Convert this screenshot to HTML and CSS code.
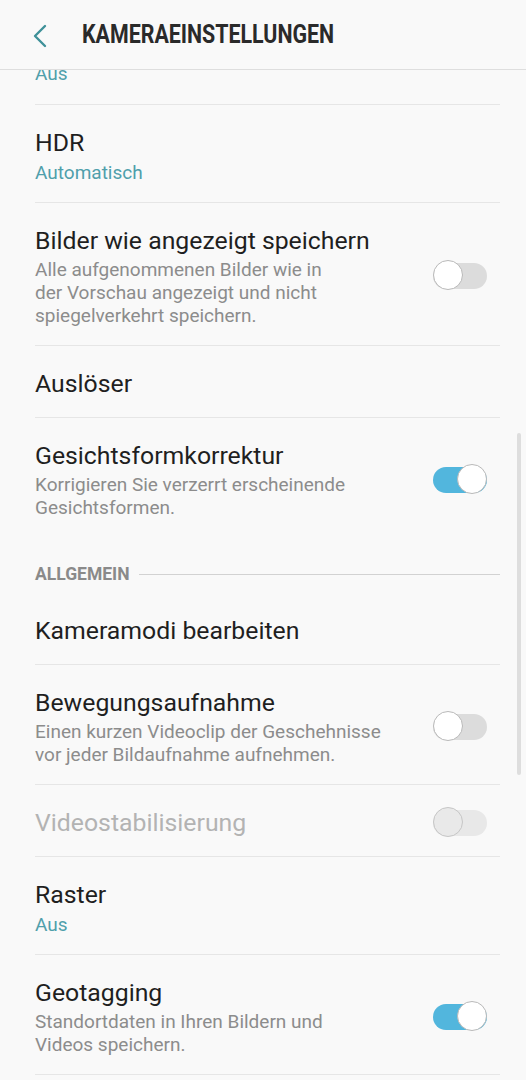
FILE: index.html
```html
<!DOCTYPE html>
<html lang="de">
<head>
    <meta charset="UTF-8">
    <meta name="viewport" content="width=device-width, initial-scale=1.0">
    <title>Kameraeinstellungen</title>
    <link rel="stylesheet" href="styles.css">
</head>
<body>
    <div class="screen">
        <div class="header">
            <svg class="back" width="16" height="24" viewBox="0 0 16 24">
                <path d="M13 2 L3 12 L13 22" fill="none" stroke="#3f9199" stroke-width="2.4" stroke-linecap="round" stroke-linejoin="round"/>
            </svg>
            <h1 class="title">KAMERAEINSTELLUNGEN</h1>
        </div>

        <div class="list">
            <div class="row partial">
                <div class="cut"><div class="sub">Aus</div></div>
            </div>

            <div class="row">
                <div class="text">
                    <div class="label">HDR</div>
                    <div class="sub">Automatisch</div>
                </div>
            </div>

            <div class="row">
                <div class="text">
                    <div class="label">Bilder wie angezeigt speichern</div>
                    <div class="desc">Alle aufgenommenen Bilder wie in<br>der Vorschau angezeigt und nicht<br>spiegelverkehrt speichern.</div>
                </div>
                <div class="switch"><div class="knob"></div></div>
            </div>

            <div class="row">
                <div class="text">
                    <div class="label">Auslöser</div>
                </div>
            </div>

            <div class="row last">
                <div class="text">
                    <div class="label">Gesichtsformkorrektur</div>
                    <div class="desc">Korrigieren Sie verzerrt erscheinende<br>Gesichtsformen.</div>
                </div>
                <div class="switch on"><div class="knob"></div></div>
            </div>

            <div class="section">
                <span>ALLGEMEIN</span>
                <div class="rule"></div>
            </div>

            <div class="row">
                <div class="text">
                    <div class="label">Kameramodi bearbeiten</div>
                </div>
            </div>

            <div class="row">
                <div class="text">
                    <div class="label">Bewegungsaufnahme</div>
                    <div class="desc">Einen kurzen Videoclip der Geschehnisse<br>vor jeder Bildaufnahme aufnehmen.</div>
                </div>
                <div class="switch"><div class="knob"></div></div>
            </div>

            <div class="row disabled">
                <div class="text">
                    <div class="label">Videostabilisierung</div>
                </div>
                <div class="switch"><div class="knob"></div></div>
            </div>

            <div class="row">
                <div class="text">
                    <div class="label">Raster</div>
                    <div class="sub">Aus</div>
                </div>
            </div>

            <div class="row">
                <div class="text">
                    <div class="label">Geotagging</div>
                    <div class="desc">Standortdaten in Ihren Bildern und<br>Videos speichern.</div>
                </div>
                <div class="switch on"><div class="knob"></div></div>
            </div>
        </div>

        <div class="scrollbar"></div>
    </div>
</body>
</html>
```

FILE: styles.css
```css
body {
    margin: 0;
    font-family: Roboto, "Noto Sans", sans-serif;
    background-color: #f9f9f9;
}
.screen {
    position: relative;
    height: 1080px;
    overflow: hidden;
    background-color: #f9f9f9;
}
.header {
    height: 69px;
    display: flex;
    align-items: center;
    border-bottom: 1px solid #dedede;
    background-color: #f9f9f9;
}
.back {
    margin-left: 32px;
    margin-top: 2px;
}
.title {
    margin: 0 0 0 34px;
    font-size: 25px;
    font-weight: 700;
    color: #2a2a2a;
    white-space: nowrap;
    transform: scaleX(0.855);
    transform-origin: left center;
}
.row {
    display: flex;
    align-items: center;
    margin: 0 26px 0 35px;
    padding: 22px 13px 18px 0;
    border-bottom: 1px solid #e6e6e6;
}
.row.last {
    border-bottom: none;
    padding-bottom: 19px;
}
.row.partial {
    padding: 0;
    height: 34px;
}
.cut {
    height: 34px;
    overflow: hidden;
}
.cut .sub {
    margin-top: -8px;
}
.text {
    flex: 1;
    min-width: 0;
}
.label {
    font-size: 24.8px;
    line-height: 31px;
    color: #1f1f1f;
    white-space: nowrap;
}
.sub {
    margin-top: 3px;
    font-size: 19px;
    line-height: 23px;
    color: #4f9fab;
}
.desc {
    margin-top: 2px;
    font-size: 19px;
    line-height: 23px;
    color: #8c8c8c;
    white-space: nowrap;
}
.disabled .label {
    color: #b3b3b3;
}
.switch {
    position: relative;
    width: 54px;
    height: 26px;
    border-radius: 13px;
    background-color: #dcdcdc;
    flex-shrink: 0;
}
.knob {
    position: absolute;
    top: -3px;
    left: 0;
    width: 30px;
    height: 30px;
    box-sizing: border-box;
    border-radius: 50%;
    background-color: #ffffff;
    border: 1px solid #b9b9b9;
}
.switch.on {
    background-color: #52b6dd;
}
.switch.on .knob {
    left: 24px;
}
.disabled .switch {
    background-color: #e8e8e8;
}
.disabled .knob {
    background-color: #e9e9e9;
    border-color: #c6c6c6;
}
.section {
    display: flex;
    align-items: center;
    margin: 0 26px 0 35px;
    padding: 26px 0 9px 0;
    height: 20px;
}
.section span {
    font-size: 17.5px;
    font-weight: 700;
    color: #8a8a8a;
}
.rule {
    flex: 1;
    height: 1px;
    margin-left: 9px;
    background-color: #d2d2d2;
}
.scrollbar {
    position: absolute;
    top: 433px;
    right: 5px;
    width: 4px;
    height: 342px;
    border-radius: 2px;
    background-color: #dedede;
}
```
